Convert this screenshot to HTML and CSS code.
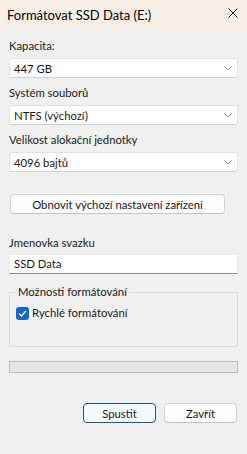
FILE: index.html
```html
<!DOCTYPE html>
<html lang="cs">
<head>
    <meta charset="UTF-8">
    <meta name="viewport" content="width=device-width, initial-scale=1.0">
    <title>Formátovat SSD Data (E:)</title>
    <link rel="stylesheet" href="styles.css">
</head>
<body>
    <div class="dialog">
        <div class="title-bar">
            <span class="title">Formátovat SSD Data (E:)</span>
            <button class="close-btn" title="Zavřít">
                <svg width="10" height="10" viewBox="0 0 10 10"><path d="M0.5 0.5 L9.5 9.5 M9.5 0.5 L0.5 9.5" stroke="#1b1b1b" stroke-width="1"/></svg>
            </button>
        </div>

        <div class="form">
            <div class="field-label">Kapacita:</div>
            <div class="select">
                <span>447 GB</span>
                <svg class="chevron" width="8" height="5" viewBox="0 0 8 5"><path d="M0.5 0.5 L4 4 L7.5 0.5" fill="none" stroke="#8a8a8a"/></svg>
            </div>

            <div class="field-label">Systém souborů</div>
            <div class="select">
                <span>NTFS (výchozí)</span>
                <svg class="chevron" width="8" height="5" viewBox="0 0 8 5"><path d="M0.5 0.5 L4 4 L7.5 0.5" fill="none" stroke="#8a8a8a"/></svg>
            </div>

            <div class="field-label">Velikost alokační jednotky</div>
            <div class="select">
                <span>4096 bajtů</span>
                <svg class="chevron" width="8" height="5" viewBox="0 0 8 5"><path d="M0.5 0.5 L4 4 L7.5 0.5" fill="none" stroke="#8a8a8a"/></svg>
            </div>

            <button class="btn btn-restore">Obnovit výchozí nastavení zařízení</button>

            <div class="field-label field-label-name">Jmenovka svazku</div>
            <div class="text-input">SSD Data</div>

            <fieldset class="options">
                <legend>Možnosti formátování</legend>
                <div class="check-row">
                    <span class="checkbox">
                        <svg width="9" height="7" viewBox="0 0 9 7"><path d="M1 3.6 L3.4 6 L8 1" fill="none" stroke="#fff" stroke-width="1.3"/></svg>
                    </span>
                    <span>Rychlé formátování</span>
                </div>
            </fieldset>

            <div class="progress"></div>

            <div class="actions">
                <button class="btn btn-primary">Spustit</button>
                <button class="btn">Zavřít</button>
            </div>
        </div>
    </div>
</body>
</html>
```

FILE: styles.css
```css
body {
    margin: 0;
    font-family: Lato, "Noto Sans", sans-serif;
    font-size: 11.3px;
    color: #1a1a1a;
    background-color: #f0f0f0;
}
.dialog {
    width: 247px;
    height: 454px;
    background-color: #f0f0f0;
}
.title-bar {
    height: 30px;
    display: flex;
    align-items: center;
    justify-content: space-between;
    padding: 0 8px 0 7px;
    background-color: #f7efe6;
    box-sizing: border-box;
}
.title {
    color: #000;
    font-size: 13px;
}
.close-btn {
    border: none;
    background: none;
    padding: 0;
    width: 12px;
    height: 12px;
    display: flex;
    align-items: center;
    justify-content: center;
    margin-top: -4px;
}
.form {
    padding: 8px 9px 0 9px;
    display: flex;
    flex-direction: column;
}
.field-label {
    line-height: 16px;
    margin-top: 7px;
}
.field-label:first-child {
    margin-top: 0;
}
.select {
    margin-top: 4px;
    height: 20px;
    box-sizing: border-box;
    display: flex;
    align-items: center;
    justify-content: space-between;
    padding: 0 5px 0 4px;
    background-color: #fff;
    border: 1px solid #e2e2e2;
    border-bottom-color: #cfcfcf;
    border-radius: 2px;
}
.chevron {
    display: block;
}
.btn {
    font-family: inherit;
    font-size: 11.3px;
    color: #1a1a1a;
    height: 20px;
    padding: 0;
    background-color: #fdfdfd;
    border: 1px solid #d3d3d3;
    border-bottom-color: #c4c4c4;
    border-radius: 4px;
    box-sizing: border-box;
}
.btn-restore {
    margin: 22px 13px 0 1px;
}
.field-label-name {
    margin-top: 21px;
}
.text-input {
    margin-top: 3px;
    height: 20px;
    box-sizing: border-box;
    line-height: 18px;
    padding: 0 4px;
    background-color: #fff;
    border: 1px solid #ececec;
    border-bottom-color: #8a8a8a;
}
.options {
    margin: 10px 0 0 0;
    padding: 0 6px 25px 6px;
    border: 1px solid #dadada;
    border-radius: 0;
}
.options legend {
    padding: 0 2px;
    line-height: 16px;
}
.check-row {
    margin-top: 5px;
    display: flex;
    align-items: center;
    gap: 3px;
    line-height: 16px;
}
.checkbox {
    width: 13px;
    height: 13px;
    border-radius: 3px;
    background-color: #1b64c1;
    display: flex;
    align-items: center;
    justify-content: center;
}
.progress {
    margin-top: 14px;
    height: 12px;
    box-sizing: border-box;
    background-color: #e6e6e6;
    border: 1px solid #bcbcbc;
}
.actions {
    margin-top: 30px;
    margin-right: 1px;
    display: flex;
    justify-content: flex-end;
    gap: 8px;
}
.actions .btn {
    width: 73px;
}
.btn-primary {
    background-color: #f5fbfd;
    border: 1px solid #1c5a78;
}
```
